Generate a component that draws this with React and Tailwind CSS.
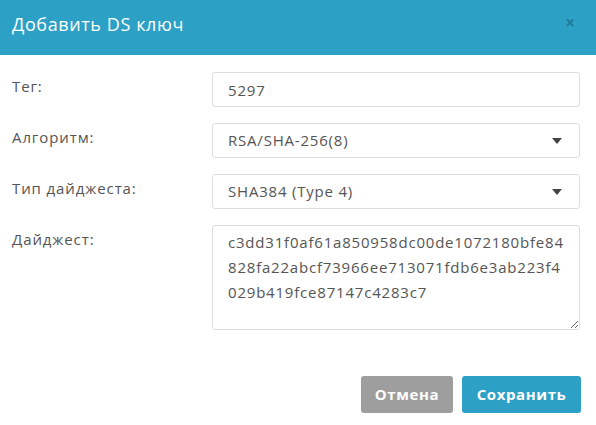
const font = { fontFamily: '"Open Sans", "Noto Sans", sans-serif' };

// hash is broken into fixed lines of 37 chars
const digest = [
  'c3dd31f0af61a850958dc00de1072180bfe84',
  '828fa22abcf73966ee713071fdb6e3ab223f4',
  '029b419fce87147c4283c7',
].join('\n');

function Caret() {
  return (
    <svg width="10" height="6" viewBox="0 0 10 6" className="shrink-0">
      <path d="M0 0h10L5 6z" fill="#444" />
    </svg>
  );
}

function Row({ label, children }) {
  return (
    <div className="flex">
      <label className="w-[200px] shrink-0 pt-[3px] text-[15px] tracking-[0.9px] text-[#555]">{label}</label>
      <div className="flex-1">{children}</div>
    </div>
  );
}

function SelectBox({ value }) {
  return (
    <div className="flex h-[35px] w-full items-center gap-2 rounded-[3px] border border-[#ddd] bg-white pr-[17px] text-[15px] tracking-[0.8px] text-[#555]">
      <span className="flex-1 pl-[15px]">{value}</span>
      <Caret />
    </div>
  );
}

export default function App() {
  return (
    <div className="h-[425px] w-[596px] overflow-hidden bg-white" style={font}>
      <div className="flex h-[55px] justify-between bg-[#2ca1c5] pl-[12px] pr-[21px]">
        <h1 className="pt-[11px] text-[18px] tracking-[0.6px] text-white">Добавить DS ключ</h1>
        <span className="pt-[14px] text-[17px] font-bold leading-none text-[#1f7c9b]">×</span>
      </div>

      <div className="flex flex-col gap-[16px] pl-[12px] pr-[16px] pt-[17px]">
        <Row label="Тег:">
          <input
            className="h-[35px] w-full rounded-[3px] border border-[#ddd] px-[15px] text-[15px] tracking-[0.8px] text-[#555] outline-none"
            defaultValue="5297"
          />
        </Row>
        <Row label="Алгоритм:">
          <SelectBox value="RSA/SHA-256(8)" />
        </Row>
        <Row label="Тип дайджеста:">
          <SelectBox value="SHA384 (Type 4)" />
        </Row>
        <Row label="Дайджест:">
          <textarea
            className="block h-[105px] w-full resize-y whitespace-pre rounded-[3px] border border-[#ddd] px-[15px] py-[4px] text-[15px] leading-[25px] tracking-[0.8px] text-[#555] outline-none"
            defaultValue={digest}
          />
        </Row>
      </div>

      <div className="flex justify-end gap-[9px] pr-[15px] pt-[46px]">
        <button className="h-[37px] w-[92px] rounded-[3px] bg-[#9e9e9e] text-[15px] font-bold tracking-[0.6px] text-white">Отмена</button>
        <button className="h-[37px] w-[119px] rounded-[3px] bg-[#2ca1c5] text-[15px] font-bold tracking-[0.6px] text-white">Сохранить</button>
      </div>
    </div>
  );
}
